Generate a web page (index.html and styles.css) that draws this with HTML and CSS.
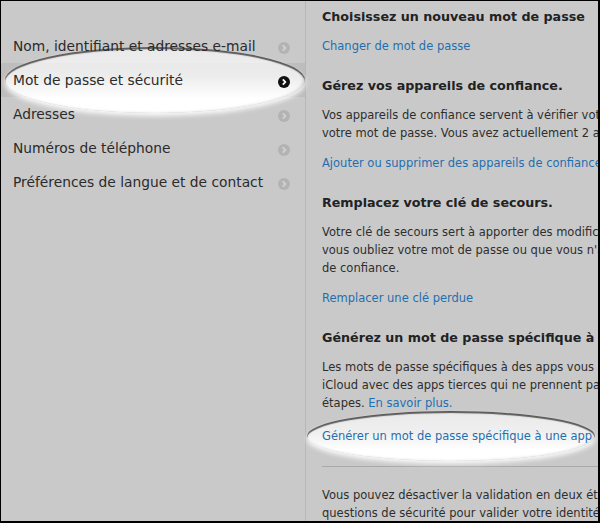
FILE: index.html
```html
<!DOCTYPE html>
<html lang="fr">
<head>
  <meta charset="UTF-8" />
  <meta name="viewport" content="width=device-width, initial-scale=1.0" />
  <title>Mot de passe et sécurité</title>
  <link rel="stylesheet" href="styles.css">
</head>
<body>
  <div class="frame">
    <div class="spot spot-menu"></div>
    <div class="spot spot-link"></div>

    <ul class="sidebar">
      <li><span class="label">Nom, identifiant et adresses e-mail</span>
        <svg class="chev" viewBox="0 0 12 12"><circle cx="6" cy="6" r="6"/><path d="M4.8 3.4 L7.3 6 L4.8 8.6"/></svg></li>
      <li class="active"><span class="label">Mot de passe et sécurité</span>
        <svg class="chev" viewBox="0 0 12 12"><circle cx="6" cy="6" r="6"/><path d="M4.8 3.4 L7.3 6 L4.8 8.6"/></svg></li>
      <li><span class="label">Adresses</span>
        <svg class="chev" viewBox="0 0 12 12"><circle cx="6" cy="6" r="6"/><path d="M4.8 3.4 L7.3 6 L4.8 8.6"/></svg></li>
      <li><span class="label">Numéros de téléphone</span>
        <svg class="chev" viewBox="0 0 12 12"><circle cx="6" cy="6" r="6"/><path d="M4.8 3.4 L7.3 6 L4.8 8.6"/></svg></li>
      <li><span class="label">Préférences de langue et de contact</span>
        <svg class="chev" viewBox="0 0 12 12"><circle cx="6" cy="6" r="6"/><path d="M4.8 3.4 L7.3 6 L4.8 8.6"/></svg></li>
    </ul>

    <div class="content">
      <div class="section">
        <h2>Choisissez un nouveau mot de passe</h2>
        <a class="action first" href="#">Changer de mot de passe</a>
      </div>

      <div class="section">
        <h2>Gérez vos appareils de confiance.</h2>
        <p>Vos appareils de confiance servent à vérifier votre identité lorsque vous modifiez<br>
        votre mot de passe. Vous avez actuellement 2 appareils de confiance.</p>
        <a class="action" href="#">Ajouter ou supprimer des appareils de confiance</a>
      </div>

      <div class="section">
        <h2>Remplacez votre clé de secours.</h2>
        <p>Votre clé de secours sert à apporter des modifications à votre compte si<br>
        vous oubliez votre mot de passe ou que vous n'avez plus accès à vos appareils<br>
        de confiance.</p>
        <a class="action" href="#">Remplacer une clé perdue</a>
      </div>

      <div class="section">
        <h2>Générez un mot de passe spécifique à une app.</h2>
        <p>Les mots de passe spécifiques à des apps vous permettent de vous connecter à<br>
        iCloud avec des apps tierces qui ne prennent pas en charge la validation en deux<br>
        étapes. <a href="#">En savoir plus.</a></p>
        <a class="action last" href="#">Générer un mot de passe spécifique à une app</a>
      </div>

      <hr class="divider">

      <p class="footnote">Vous pouvez désactiver la validation en deux étapes et utiliser des<br>
      questions de sécurité pour valider votre identité.</p>
    </div>
  </div>
</body>
</html>
```

FILE: styles.css
```css
body {
  margin: 0;
  font-family: "DejaVu Sans", Verdana, sans-serif;
  background-color: #c9c9c9;
}

.frame {
  position: relative;
  display: flex;
  width: 600px;
  height: 523px;
  box-sizing: border-box;
  border: 1px solid #000;
  border-right-width: 2px;
  border-bottom-width: 2px;
  background-color: #c9c9c9;
  overflow: hidden;
}

/* Ellipses de mise en évidence */
.spot {
  position: absolute;
  z-index: 0;
  border-radius: 50%;
  background: linear-gradient(to bottom, rgba(255, 255, 255, 0.6) 0%, rgba(255, 255, 255, 0.72) 45%, #ffffff 78%);
  box-shadow: inset 0 2px 1px rgba(0, 0, 0, 0.6), inset -2px 0 3px rgba(0, 0, 0, 0.12), 0 3px 5px rgba(255, 255, 255, 0.9);
}

.spot-menu {
  left: 4px;
  top: 46px;
  width: 300px;
  height: 66px;
}

.spot-link {
  left: 306px;
  top: 410px;
  width: 288px;
  height: 50px;
}

/* Menu latéral */
.sidebar {
  list-style: none;
  margin: 0;
  padding: 28px 0 0;
  width: 304px;
  flex-shrink: 0;
  border-right: 1px solid #b7b7b7;
}

.sidebar li {
  display: flex;
  align-items: center;
  justify-content: space-between;
  height: 34px;
  padding: 0 15px 0 12px;
  font-size: 13.8px;
  color: #2b2b2b;
}

.sidebar li.active {
  background-color: #bdbdbd;
}

.label {
  position: relative;
  z-index: 1;
}

.chev {
  position: relative;
  z-index: 1;
  width: 12px;
  height: 12px;
  margin-top: 3px;
}

.chev circle {
  fill: #b3b3b3;
}

.chev path {
  fill: none;
  stroke: #d2d2d2;
  stroke-width: 1.8;
}

.active .chev circle {
  fill: #111;
}

.active .chev path {
  stroke: #fff;
}

/* Contenu */
.content {
  flex: 1;
  padding: 6px 0 0 16px;
  white-space: nowrap;
  overflow: hidden;
}

.section {
  margin-bottom: 21px;
}

.section h2 {
  position: relative;
  z-index: 1;
  margin: 0 0 10px;
  font-size: 12.7px;
  line-height: 20px;
  color: #222;
}

.content p {
  position: relative;
  z-index: 1;
  margin: 0;
  font-size: 11.5px;
  line-height: 18px;
  color: #2e2e2e;
}

.content a {
  color: #1f6fb0;
  text-decoration: none;
}

.action {
  position: relative;
  z-index: 1;
  display: block;
  margin-top: 12px;
  font-size: 11.5px;
  line-height: 18px;
}

.action.first {
  margin-top: 0;
}

.action.last {
  margin-top: 15px;
}

.divider {
  margin: 6px 0 19px;
  border: none;
  border-top: 1px solid #a9a9a9;
}

.content p.footnote {
  margin: 0;
}
```
